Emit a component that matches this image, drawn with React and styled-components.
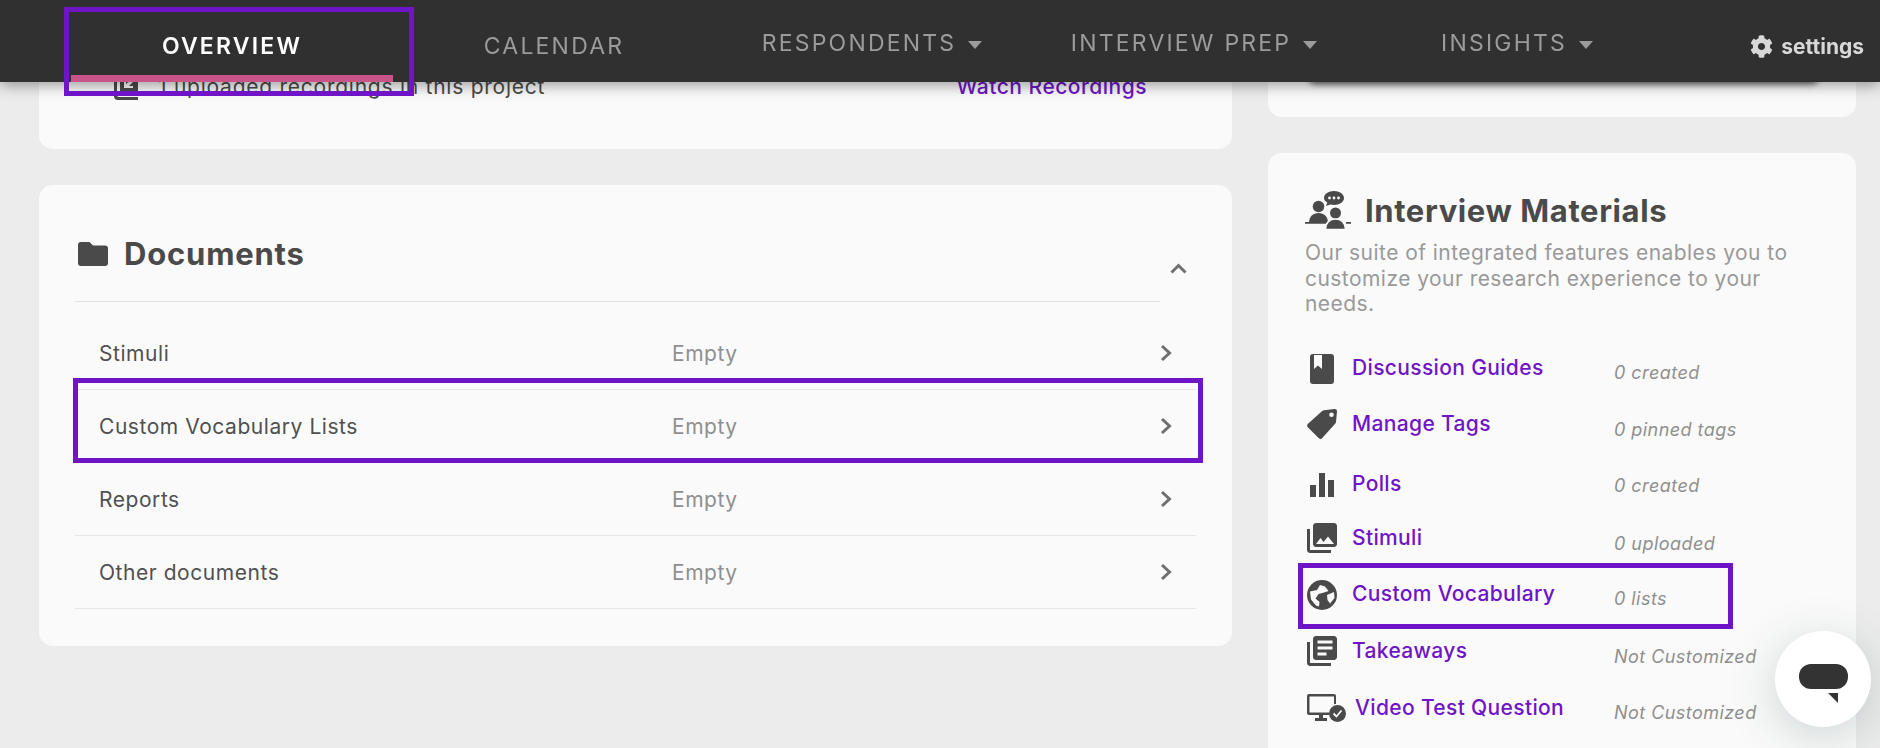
import React from "react";
import styled, { createGlobalStyle } from "styled-components";
import { FaCog } from "react-icons/fa";

const purple = "#6f14c6";
const dark = "#4a4a4a";

const GlobalStyle = createGlobalStyle`
  html, body {
    margin: 0;
    height: 748px;
    overflow: hidden;
    background: #ececec;
    font-family: Inter, "Open Sans", sans-serif;
  }
`;

const Header = styled.header`
  position: fixed;
  top: 0;
  left: 0;
  right: 0;
  height: 82px;
  z-index: 5;
  display: flex;
  padding: 0 16px 0 71px;
  box-sizing: border-box;
  background: #303030;
  box-shadow: 0 3px 14px rgba(0, 0, 0, 0.4);
`;

const NavItem = styled.div`
  position: relative;
  width: 322px;
  height: 82px;
  display: flex;
  align-items: center;
  justify-content: center;
  gap: 12px;
  box-sizing: border-box;
  padding-top: ${(p) => (p.$menu ? "4px" : p.$active ? "23px" : "16px")};
  padding-bottom: ${(p) => (p.$menu ? "0" : "6px")};
  padding-right: ${(p) => p.$pull || 0}px;
  font-size: 23px;
  font-weight: ${(p) => (p.$active ? 600 : 400)};
  letter-spacing: ${(p) => (p.$active ? "2.2px" : "2.2px")};
  white-space: nowrap;
  color: ${(p) => (p.$active ? "#fff" : "#9b9b9b")};
  border-bottom: ${(p) => (p.$active ? "7px solid #c8548a" : "none")};
`;

const Caret = styled.span`
  width: 0;
  height: 0;
  margin-top: 3px;
  border-left: 7.5px solid transparent;
  border-right: 7.5px solid transparent;
  border-top: 8px solid #9b9b9b;
`;

const OverviewFrame = styled.div`
  position: absolute;
  left: -7px;
  right: -21px;
  top: 7px;
  bottom: -21px;
  border: 5px solid ${purple};
`;

const Settings = styled.div`
  margin-left: auto;
  display: flex;
  align-items: center;
  gap: 8px;
  padding-top: 10px;
  color: #d8d8d8;
  font-size: 21px;
  font-weight: 700;
`;

const Page = styled.main`
  height: 748px;
  overflow: hidden;
  display: grid;
  grid-template-columns: 1193px 588px;
  gap: 36px;
  padding-left: 39px;
`;

const Column = styled.div`
  display: flex;
  flex-direction: column;
  gap: 36px;
`;

const Card = styled.section`
  background: #fafafa;
  border-radius: 0 0 14px 14px;
  border-top-left-radius: ${(p) => (p.$top ? "14px" : "0")};
  border-top-right-radius: ${(p) => (p.$top ? "14px" : "0")};
  box-sizing: border-box;
`;

const RecordingsRow = styled.div`
  height: 149px;
  box-sizing: border-box;
  padding: 70px 85px 0 75px;
  display: flex;
  align-items: flex-start;
  justify-content: space-between;
  font-size: 21px;
  letter-spacing: 0.75px;
  line-height: 34px;
  color: ${dark};
`;

const RecordingsLabel = styled.div`
  display: flex;
  gap: 20px;
  align-items: flex-start;
`;

const WatchLink = styled.a`
  color: ${purple};
  font-weight: 500;
  letter-spacing: 0.5px;
`;

const HiddenButtonCard = styled(Card)`
  height: 117px;
  padding: 20px 38px 0 41px;
`;

const HiddenButton = styled.div`
  height: 60px;
  border-radius: 6px;
  background: #e8e8e8;
  box-shadow: 0 4px 6px rgba(0, 0, 0, 0.6);
`;

const SectionHead = styled.div`
  display: flex;
  padding-left: 36px;
`;

const SectionTitle = styled.div`
  flex: 0 0 1085px;
  box-sizing: border-box;
  display: flex;
  align-items: center;
  gap: 16px;
  padding: 51px 0 29px 3px;
  border-bottom: 1px solid #e2e2e2;
  color: ${dark};
  font-size: 31px;
  letter-spacing: 0.8px;
  line-height: 36px;
  font-weight: 700;
`;

const Collapse = styled.svg`
  margin: 78px 0 0 10px;
  width: 17px;
  height: 11px;
  fill: none;
  stroke: #6f6f6f;
  stroke-width: 3;
`;

const DocList = styled.div`
  padding: 15px 36px 37px 36px;
`;

const DocRow = styled.div`
  position: relative;
  height: 73px;
  box-sizing: border-box;
  display: grid;
  grid-template-columns: 573px 1fr 12px;
  align-items: center;
  padding: 0 24px 0 24px;
  border-bottom: 1px solid #e6e6e6;
  font-size: 21px;
  letter-spacing: 0.55px;
  color: #505050;
`;

const DocState = styled.span`
  color: #8f8f8f;
`;

const RowChevron = styled.svg`
  width: 12px;
  height: 18px;
  fill: none;
  stroke: #6f6f6f;
  stroke-width: 3;
`;

const HighlightFrame = styled.div`
  position: absolute;
  left: ${(p) => p.$l}px;
  right: ${(p) => p.$r}px;
  top: ${(p) => p.$t}px;
  bottom: ${(p) => p.$b}px;
  border: 5px solid ${purple};
`;

const MaterialsCard = styled(Card)`
  padding: 38px 37px 40px;
  height: 640px;
`;

const MaterialsTitle = styled.div`
  display: flex;
  align-items: center;
  gap: 14px;
  color: ${dark};
  font-size: 31px;
  letter-spacing: 0.6px;
  font-weight: 700;
  line-height: 37px;
`;

const MaterialsText = styled.p`
  margin: 11px 0 0;
  max-width: 495px;
  color: #999;
  font-size: 21px;
  letter-spacing: 0.45px;
  line-height: 25.5px;
`;

const MaterialsList = styled.div`
  margin-top: 35px;
`;

const MaterialRow = styled.div`
  position: relative;
  height: 30px;
  margin-top: ${(p) => p.$gap}px;
  display: grid;
  grid-template-columns: 47px 262px 1fr;
  align-items: center;
`;

const IconSlot = styled.div`
  width: ${(p) => p.$width || 30}px;
  display: flex;
  align-items: center;
  justify-content: center;
  margin: 2px 0 0 2px;
  color: ${dark};
`;

const MaterialName = styled.a`
  color: ${purple};
  font-size: 21px;
  letter-spacing: 0.35px;
  font-weight: 500;
  white-space: nowrap;
  margin-left: ${(p) => p.$in || 0}px;
`;

const MaterialStatus = styled.span`
  color: #8f8f8f;
  font-size: 18px;
  letter-spacing: 0.45px;
  font-style: italic;
  white-space: nowrap;
  margin-top: ${(p) => p.$drop}px;
`;

const ChatBubble = styled.div`
  position: fixed;
  left: 1775px;
  top: 631px;
  width: 96px;
  height: 96px;
  border-radius: 50%;
  background: #fff;
  box-shadow: 0 10px 50px rgba(30, 60, 60, 0.2);
  z-index: 6;
  display: flex;
  flex-direction: column;
  align-items: center;
  padding-top: 33px;
  box-sizing: border-box;
`;

const ChatPill = styled.div`
  width: 49px;
  height: 25px;
  border-radius: 12px;
  background: #333;
`;

const ChatTail = styled.svg`
  width: 10px;
  height: 10px;
  margin: 4px 0 0 20px;
  fill: #333;
`;

const docs = [
  { name: "Stimuli" },
  { name: "Custom Vocabulary Lists", framed: true },
  { name: "Reports" },
  { name: "Other documents" },
];

const FolderIcon = () => (
  <svg width="30" height="24" viewBox="0 0 30 24">
    <path fill={dark} d="M3 0h8.500l3.500 3.500h12a3 3 0 0 1 3 3V21a3 3 0 0 1-3 3H3a3 3 0 0 1-3-3V3a3 3 0 0 1 3-3z" />
  </svg>
);

const BookIcon = () => (
  <svg width="24" height="30" viewBox="0 0 24 30">
    <path fill="currentColor" d="M3 0h18a3 3 0 0 1 3 3v24a3 3 0 0 1-3 3H3a3 3 0 0 1-3-3V3a3 3 0 0 1 3-3z" />
    <path fill="#fafafa" d="M4 1h8v14l-4-3.400L4 15z" />
  </svg>
);

const TagIcon = () => (
  <svg width="30" height="30" viewBox="0 0 30 30">
    <path fill="currentColor" fillRule="evenodd" d="M17 1.200 27.500 0a2.400 2.400 0 0 1 2.500 2.500L29 13a3 3 0 0 1-.9 1.800L15.300 29a2.600 2.600 0 0 1-3.700 0L1 18.400a2.600 2.600 0 0 1 0-3.700L15.200 2a3 3 0 0 1 1.800-.8zM24.500 3.400a2.300 2.300 0 1 0 0 4.600 2.300 2.300 0 0 0 0-4.600z" />
  </svg>
);

const BarsIcon = () => (
  <svg width="24" height="24" viewBox="0 0 24 24">
    <path fill="currentColor" d="M0 12h6v12H0zM9 0h6v24H9zM18 7h6v17h-6z" />
  </svg>
);

const PhotosIcon = () => (
  <svg width="30" height="30" viewBox="2 2 20 20">
    <path fill="currentColor" d="M22 16V4c0-1.100-.9-2-2-2H8c-1.100 0-2 .9-2 2v12c0 1.100.9 2 2 2h12c1.100 0 2-.9 2-2zm-11-4l2.030 2.710L16 11l4 5H8l3-4zM2 6v14c0 1.100.9 2 2 2h14v-2H4V6H2z" />
  </svg>
);

const GlobeIcon = () => (
  <svg width="30" height="30" viewBox="0 0 30 30">
    <circle cx="15" cy="15" r="15" fill="currentColor" />
    <path fill="#fafafa" strokeLinejoin="round" d="M3 11.500 10 10l3-5 5 1.500 3.500 4.500-6 2-4 1-3 4.500 4 3.500-.5 4.500-3-1L4 19.500z" />
    <path fill="#fafafa" strokeLinejoin="round" d="M20 15l7-3 .5 6-4.500 5.500-2.500-3.500z" />
  </svg>
);

const NotesIcon = () => (
  <svg width="30" height="30" viewBox="2 2 20 20">
    <path fill="currentColor" d="M4 6H2v14c0 1.100.9 2 2 2h14v-2H4V6zm16-4H8c-1.100 0-2 .9-2 2v12c0 1.100.9 2 2 2h12c1.100 0 2-.9 2-2V4c0-1.100-.9-2-2-2zm-1 9H9V9h10v2zm-4 4H9v-2h6v2zm4-8H9V5h10v2z" />
  </svg>
);

const ScreenCheckIcon = () => (
  <svg width="39" height="28" viewBox="0 0 39 28">
    <path fill="currentColor" fillRule="evenodd" d="M2 0h25a2 2 0 0 1 2 2v8h-2V2.500H2.500v16H22V21H16v3h4v3H8v-3h4v-3H2a2 2 0 0 1-2-2V2a2 2 0 0 1 2-2z" />
    <circle cx="30.500" cy="19.500" r="8.500" fill="currentColor" />
    <path fill="none" stroke="#fafafa" strokeWidth="1.800" d="M26.500 19.500l3 3 5-6" />
  </svg>
);

const TeamChatIcon = () => (
  <svg width="46" height="38" viewBox="0 0 46 38">
    <path fill="currentColor" d="M29 0c5.500 0 10 3 10 7s-4.500 7-10 7c-1.300 0-2.500-.2-3.600-.5L21 15l1.300-3.600C20.200 10.200 19 8.700 19 7c0-4 4.500-7 10-7z" />
    <circle cx="24.500" cy="7" r="1.400" fill="#fafafa" />
    <circle cx="29" cy="7" r="1.400" fill="#fafafa" />
    <circle cx="33.500" cy="7" r="1.400" fill="#fafafa" />
    <circle cx="13.500" cy="15.500" r="5.800" fill="currentColor" />
    <path fill="currentColor" d="M4 32c0-6.500 4-10 9.500-10s9.500 3.500 9.500 10z" />
    <path fill="currentColor" d="M0 31h21v1.800H0zM41 31h5v1.800h-5z" />
    <circle cx="30.500" cy="22" r="5.500" fill="currentColor" />
    <path fill="currentColor" stroke="#fafafa" strokeWidth="1.500" d="M20.500 38.500c0-7 4.500-10.500 10-10.500s10 3.500 10 10.500z" />
  </svg>
);

const materials = [
  { name: "Discussion Guides", status: "0 created", gap: 0, drop: 10, icon: <BookIcon /> },
  { name: "Manage Tags", status: "0 pinned tags", gap: 25, drop: 12, icon: <TagIcon /> },
  { name: "Polls", status: "0 created", gap: 32, drop: 4, icon: <BarsIcon /> },
  { name: "Stimuli", status: "0 uploaded", gap: 22, drop: 12, icon: <PhotosIcon /> },
  { name: "Custom Vocabulary", status: "0 lists", gap: 27, drop: 10, icon: <GlobeIcon />, framed: true },
  { name: "Takeaways", status: "Not Customized", gap: 26, drop: 12, icon: <NotesIcon /> },
  { name: "Video Test Question", status: "Not Customized", gap: 28, drop: 10, in: 3, width: 39, icon: <ScreenCheckIcon /> },
];

export default function App() {
  return (
    <>
      <GlobalStyle />
      <Header>
        <NavItem $active>
          OVERVIEW
          <OverviewFrame />
        </NavItem>
        <NavItem>CALENDAR</NavItem>
        <NavItem $menu $pull={8}>RESPONDENTS <Caret /></NavItem>
        <NavItem $menu $pull={8}>INTERVIEW PREP <Caret /></NavItem>
        <NavItem $menu $pull={6}>INSIGHTS <Caret /></NavItem>
        <Settings>
          <FaCog size={23} />
          settings
        </Settings>
      </Header>

      <Page>
        <Column>
          <Card>
            <RecordingsRow>
              <RecordingsLabel>
                <svg width="24" height="30" viewBox="0 0 24 30">
                  <path fill={dark} d="M6 0h18v23H6z" />
                  <path fill={dark} d="M0 6h3v19c0 1 .5 2 2 2h19v3H4c-2.500 0-4-1.500-4-4z" />
                  <path fill="#fafafa" d="M19 8l2 2-6 6h4v2H10v-9h2v5z" />
                </svg>
                1 uploaded recordings in this project
              </RecordingsLabel>
              <WatchLink>Watch Recordings</WatchLink>
            </RecordingsRow>
          </Card>
          <Card $top>
            <SectionHead>
              <SectionTitle>
                <FolderIcon />
                Documents
              </SectionTitle>
              <Collapse viewBox="0 0 17 11">
                <path d="M1.500 9.500l7-7 7 7" />
              </Collapse>
            </SectionHead>
            <DocList>
              {docs.map((doc) => (
                <DocRow key={doc.name}>
                  {doc.name}
                  <DocState>Empty</DocState>
                  <RowChevron viewBox="0 0 12 18">
                    <path d="M2 2l7.500 7-7.500 7" />
                  </RowChevron>
                  {doc.framed && <HighlightFrame $l={-2} $r={-7} $t={-12} $b={-1} />}
                </DocRow>
              ))}
            </DocList>
          </Card>
        </Column>

        <Column>
          <HiddenButtonCard>
            <HiddenButton />
          </HiddenButtonCard>
          <MaterialsCard $top>
            <MaterialsTitle>
              <TeamChatIcon />
              Interview Materials
            </MaterialsTitle>
            <MaterialsText>
              Our suite of integrated features enables you to customize your research experience to your needs.
            </MaterialsText>
            <MaterialsList>
              {materials.map((item) => (
                <MaterialRow key={item.name} $gap={item.gap}>
                  <IconSlot $width={item.width}>{item.icon}</IconSlot>
                  <MaterialName $in={item.in}>{item.name}</MaterialName>
                  <MaterialStatus $drop={item.drop}>{item.status}</MaterialStatus>
                  {item.framed && <HighlightFrame $l={-7} $r={86} $t={-15} $b={-21} />}
                </MaterialRow>
              ))}
            </MaterialsList>
          </MaterialsCard>
        </Column>
      </Page>

      <ChatBubble>
        <ChatPill />
        <ChatTail viewBox="0 0 10 10">
          <path d="M0 0h10v10z" />
        </ChatTail>
      </ChatBubble>
    </>
  );
}
